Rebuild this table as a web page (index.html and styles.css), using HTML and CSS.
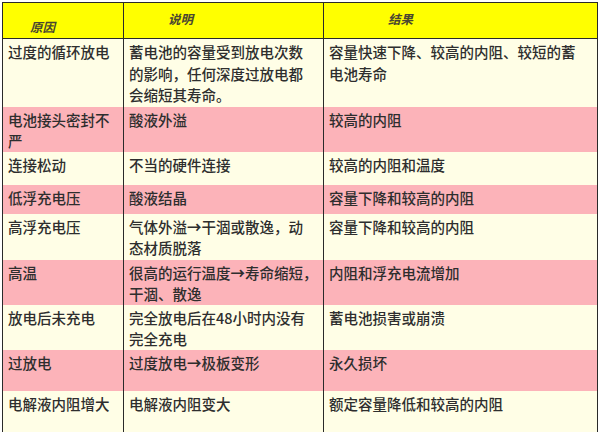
FILE: index.html
```html
<!DOCTYPE html>
<html lang="zh">
<head>
<meta charset="utf-8">
<link rel="stylesheet" href="styles.css">
</head>
<body>
<table class="grid">
  <colgroup><col class="c1"><col class="c2"><col class="c3"></colgroup>
  <tr class="head">
    <th class="h1">原因</th>
    <th class="h2">说明</th>
    <th class="h3">结果</th>
  </tr>
  <tr class="light r1">
    <td>过度的循环放电</td>
    <td>蓄电池的容量受到放电次数<br>的影响，任何深度过放电都<br>会缩短其寿命。</td>
    <td>容量快速下降、较高的内阻、较短的蓄<br>电池寿命</td>
  </tr>
  <tr class="pink r2">
    <td>电池接头密封不<br>严</td>
    <td>酸液外溢</td>
    <td>较高的内阻</td>
  </tr>
  <tr class="light r3">
    <td>连接松动</td>
    <td>不当的硬件连接</td>
    <td>较高的内阻和温度</td>
  </tr>
  <tr class="pink r4">
    <td>低浮充电压</td>
    <td>酸液结晶</td>
    <td>容量下降和较高的内阻</td>
  </tr>
  <tr class="light r5">
    <td>高浮充电压</td>
    <td>气体外溢<b class="arr">→</b>干涸或散逸，动<br>态材质脱落</td>
    <td>容量下降和较高的内阻</td>
  </tr>
  <tr class="pink r6">
    <td>高温</td>
    <td>很高的运行温度<b class="arr">→</b>寿命缩短，<br>干涸、散逸</td>
    <td>内阻和浮充电流增加</td>
  </tr>
  <tr class="light r7">
    <td>放电后未充电</td>
    <td>完全放电后在48小时内没有<br>完全充电</td>
    <td>蓄电池损害或崩溃</td>
  </tr>
  <tr class="pink r8">
    <td>过放电</td>
    <td>过度放电<b class="arr">→</b>极板变形</td>
    <td>永久损坏</td>
  </tr>
  <tr class="light r9">
    <td>电解液内阻增大</td>
    <td>电解液内阻变大</td>
    <td>额定容量降低和较高的内阻</td>
  </tr>
  <tr class="pink r10">
    <td></td>
    <td></td>
    <td></td>
  </tr>
</table>
</body>
</html>
```
FILE: styles.css
```css
html, body {
  margin: 0;
  padding: 0;
  background: #ffffff;
  width: 600px;
  height: 432px;
  overflow: hidden;
}
.grid {
  margin: 2px 0 0 2px;
  width: 595px;
  table-layout: fixed;
  border-collapse: collapse;
  border: 1px solid #2a2a2a;
  font-family: "Noto Sans CJK SC", "Noto Sans", sans-serif;
  font-size: 14.5px;
  font-weight: 500;
  line-height: 21.5px;
  color: #2e2e2e;
}
.c1 { width: 121px; }
.c2 { width: 200px; }
.c3 { width: 274px; }
.grid th, .grid td {
  border-left: 1px solid #2a2a2a;
  border-right: 1px solid #2a2a2a;
  padding: 2px 4px 0 5px;
  vertical-align: top;
  text-align: left;
  white-space: nowrap;
  overflow: hidden;
}
.head { height: 36px; background: #ffff00; }
.head th {
  border-bottom: 1px solid #2a2a2a;
  font-size: 12.5px;
  font-style: italic;
  font-weight: bold;
  color: #4a4630;
  line-height: 14px;
}
.head .h1 { vertical-align: bottom; padding: 0 0 4px 27px; }
.head .h2 { padding: 9px 0 0 44px; }
.head .h3 { padding: 9px 0 0 64px; }
.light { background: #fffee6; }
.pink { background: #fcb3b9; }
.r1 { height: 68px; }
.r2 { height: 43px; }
.r3 { height: 33px; }
.r4 { height: 29px; }
.r5 { height: 46px; }
.r6 { height: 45px; }
.r7 { height: 43px; }
.r8 { height: 41px; }
.r9 { height: 41px; }
.r10 { height: 20px; }
.arr { font-weight: bold; }
```
